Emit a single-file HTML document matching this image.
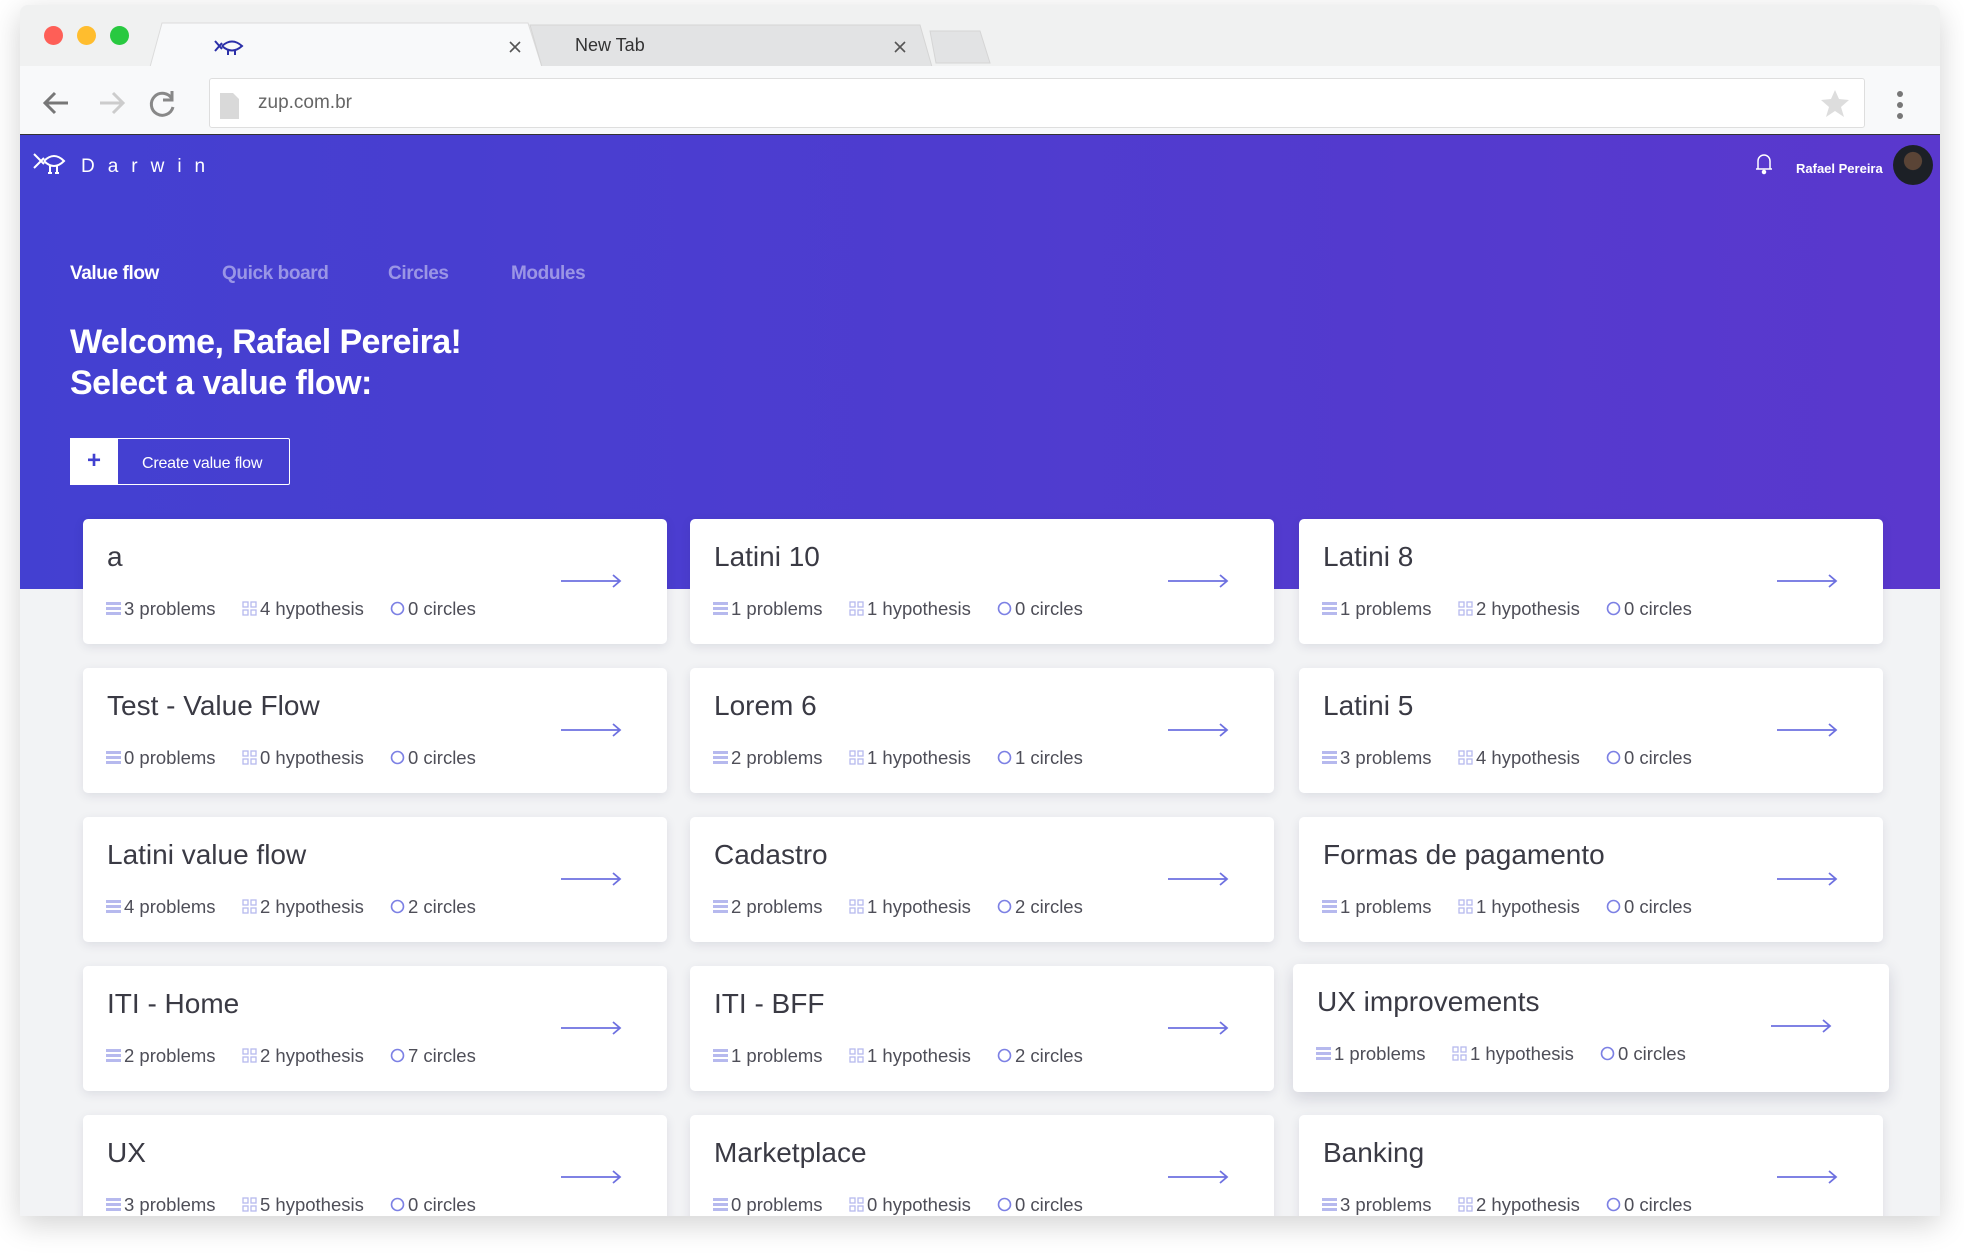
<!DOCTYPE html>
<html><head><meta charset="utf-8">
<style>
*{margin:0;padding:0;box-sizing:border-box}
body{width:1964px;height:1255px;background:#fff;position:relative;overflow:hidden;font-family:"Liberation Sans",Arial,sans-serif}
.a{position:absolute}
.win{left:20px;top:5px;width:1920px;height:1211px;background:#f2f3f5;border-radius:8px 8px 0 0;overflow:hidden;box-shadow:0 8px 30px rgba(0,0,0,.18)}
.tabbar{left:0;top:0;width:1920px;height:61px;background:#f0f1f1}
.dot{width:19px;height:19px;border-radius:50%;top:21px}
.toolbar{left:0;top:61px;width:1920px;height:69px;background:#f8f9fa;border-bottom:1px solid #333}
.hero{left:0;top:130px;width:1920px;height:454px;background:linear-gradient(90deg,#4340d1,#5a38cd)}
.card{background:#fff;border-radius:5px;box-shadow:0 3px 10px rgba(40,40,80,.10);width:584px;height:125px}
.card .t{position:absolute;left:24px;top:22px;font-size:28px;color:#3a3a44}
.card .s{position:absolute;top:79px;font-size:18.5px;color:#4e4e58;white-space:nowrap}
.card .ar{position:absolute;left:478px;top:55px}
.nav{top:258px;font-size:19px;font-weight:bold;letter-spacing:-.4px;color:rgba(255,255,255,.45)}
</style></head><body>
<div class="a win">
  <div class="a tabbar"></div>
  <div class="a dot" style="left:24px;background:#fe5f57"></div>
  <div class="a dot" style="left:57px;background:#ffbd2e"></div>
  <div class="a dot" style="left:90px;background:#28c940"></div>
  <svg class="a" style="left:120px;top:14px" width="880" height="48">
    <path d="M10 48 L22 4 L388 4 L402 48 Z" fill="#f8f9fa" stroke="#dcdcdc"/>
    <path d="M402 48 L390 6 L780 6 L792 48 Z" fill="#e2e3e4" stroke="#d5d5d5"/>
    <path d="M796 44 L790 12 L840 12 L850 44 Z" fill="#e2e3e4" stroke="#d5d5d5"/>
    <g stroke="#555" stroke-width="1.6"><path d="M370 23 L380 33 M380 23 L370 33"/><path d="M755 23 L765 33 M765 23 L755 33"/></g>
    <g fill="none" stroke="#2b2fa8" stroke-width="2"><path d="M75 22 L82 30 M75 32 L82 24 M82 27 Q92 18 102 27 Q92 36 82 27 M88 31 L88 36 M95 31 L95 36"/></g>
  </svg>
  <div class="a" style="left:555px;top:30px;font-size:18px;color:#333">New Tab</div>
  <div class="a toolbar"></div>
  <svg class="a" style="left:20px;top:78px" width="140" height="40" fill="none" stroke-width="3">
    <path d="M28 20 L6 20 M15 10 L5 20 L15 30" stroke="#777"/>
    <path d="M60 20 L82 20 M73 10 L83 20 L73 30" stroke="#ccc"/>
    <path d="M132 16 A11 11 0 1 0 133 24 M132 8 L132 17 L123 17" stroke="#888"/>
  </svg>
  <div class="a" style="left:189px;top:73px;width:1656px;height:50px;background:#fff;border:1px solid #dedede;border-radius:3px"></div>
  <svg class="a" style="left:200px;top:88px" width="20" height="26"><path d="M0 0 H13 L19 6 V26 H0 Z" fill="#d9d9d9"/></svg>
  <div class="a" style="left:238px;top:87px;font-size:19px;color:#666">zup.com.br</div>
  <svg class="a" style="left:1801px;top:84px" width="28" height="28"><path d="M14 1 L18 10 L28 11 L20 18 L23 28 L14 22 L5 28 L8 18 L0 11 L10 10 Z" fill="#ddd"/></svg>
  <div class="a" style="left:1877px;top:86px;width:6px;height:6px;border-radius:50%;background:#777;box-shadow:0 11px 0 #777,0 22px 0 #777"></div>

  <div class="a hero"></div>
  <svg class="a" style="left:12px;top:146px" width="40" height="30" fill="none" stroke="#fff" stroke-width="2"><path d="M2 3 L12 13 M2 17 L12 7 M12 10 Q22 0 32 10 Q22 20 12 10 M18 15 L18 22 M25 15 L25 22 M16 22 H20 M23 22 H27"/></svg>
  <div class="a" style="left:61px;top:151px;font-size:19px;color:#fff;letter-spacing:13px">Darwin</div>
  <svg class="a" style="left:1734px;top:147px" width="20" height="24" fill="none" stroke="#fff" stroke-width="1.5"><path d="M4 17 V9 A6 6 0 0 1 16 9 V17 Z M2 17 H18"/><circle cx="10" cy="20" r="1.5" fill="#fff"/></svg>
  <div class="a" style="left:1776px;top:156px;font-size:13px;font-weight:bold;color:#fff">Rafael Pereira</div>
  <div class="a" style="left:1873px;top:140px;width:40px;height:40px;border-radius:50%;background:radial-gradient(circle at 50% 40%,#5a4436 0 28%,#1c2026 30%)"></div>

  <div class="a nav" style="left:50px;color:#fff">Value flow</div>
  <div class="a nav" style="left:202px">Quick board</div>
  <div class="a nav" style="left:368px">Circles</div>
  <div class="a nav" style="left:491px">Modules</div>
  <div class="a" style="left:50px;top:317px;font-size:34px;font-weight:bold;color:#fff;line-height:41px;letter-spacing:-.6px">Welcome, Rafael Pereira!<br>Select a value flow:</div>
  <div class="a" style="left:50px;top:433px;width:220px;height:47px;border:1px solid #fff;border-radius:2px"></div>
  <div class="a" style="left:50px;top:433px;width:48px;height:47px;background:#fff;color:#4040d0;font-size:24px;font-weight:bold;text-align:center;line-height:45px">+</div>
  <div class="a" style="left:122px;top:450px;font-size:16px;color:#fff;letter-spacing:-.2px">Create value flow</div>

  <div id="cards"></div>
</div>
<script>
var d=[["a",3,4,0],["Latini 10",1,1,0],["Latini 8",1,2,0],["Test - Value Flow",0,0,0],["Lorem 6",2,1,1],["Latini 5",3,4,0],["Latini value flow",4,2,2],["Cadastro",2,1,2],["Formas de pagamento",1,1,0],["ITI - Home",2,2,7],["ITI - BFF",1,1,2],["UX improvements",1,1,0],["UX",3,5,0],["Marketplace",0,0,0],["Banking",3,2,0]];
var xs=[63,670,1279],h="";
var pi='<svg width="15" height="15" style="vertical-align:-1px;margin-right:3px"><g fill="#b6b9ee"><rect y="1" width="15" height="3"/><rect y="6" width="15" height="3"/><rect y="11" width="15" height="3"/></g></svg>';
var hi='<svg width="15" height="15" style="vertical-align:-1px;margin-right:3px"><g fill="none" stroke="#b6b9ee" stroke-width="1.3"><rect x="1" y="1" width="5" height="5"/><rect x="9" y="1" width="5" height="5"/><rect x="1" y="9" width="5" height="5"/><rect x="9" y="9" width="5" height="5"/></g></svg>';
var ci='<svg width="15" height="15" style="vertical-align:-1px;margin-right:3px"><circle cx="7.5" cy="7.5" r="6" fill="none" stroke="#7c80e4" stroke-width="1.6"/></svg>';
for(var i=0;i<d.length;i++){var r=Math.floor(i/3),c=i%3,x=xs[c],y=514+r*149,st='';
if(i==11){st='width:596px;height:128px;box-shadow:0 6px 16px rgba(40,40,80,.16);';x-=6;y-=2;}
h+='<div class="a card" style="'+st+'left:'+x+'px;top:'+y+'px"><div class="t">'+d[i][0]+'</div><div class="s" style="left:23px">'+pi+d[i][1]+' problems</div><div class="s" style="left:159px">'+hi+d[i][2]+' hypothesis</div><div class="s" style="left:307px">'+ci+d[i][3]+' circles</div><svg class="ar" width="62" height="14"><path d="M0 7 H59 M52 1 L59 7 L52 13" fill="none" stroke="#6d70e0" stroke-width="1.8"/></svg></div>';}
document.getElementById('cards').innerHTML=h;
</script>
</body></html>
